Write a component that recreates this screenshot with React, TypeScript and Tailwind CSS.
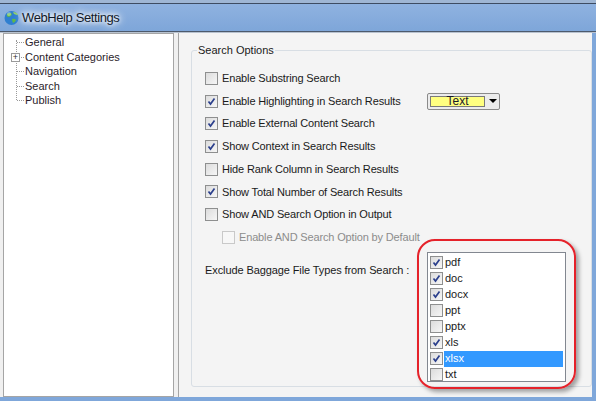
const font = { fontFamily: '"Liberation Sans", Arial, sans-serif' };

const options = [
  { label: 'Enable Substring Search', checked: false },
  { label: 'Enable Highlighting in Search Results', checked: true, dropdown: true },
  { label: 'Enable External Content Search', checked: true },
  { label: 'Show Context in Search Results', checked: true },
  { label: 'Hide Rank Column in Search Results', checked: false },
  { label: 'Show Total Number of Search Results', checked: true },
  { label: 'Show AND Search Option in Output', checked: false },
  { label: 'Enable AND Search Option by Default', checked: false, disabled: true },
];

const fileTypes = [
  { name: 'pdf', checked: true },
  { name: 'doc', checked: true },
  { name: 'docx', checked: true },
  { name: 'ppt', checked: false },
  { name: 'pptx', checked: false },
  { name: 'xls', checked: true },
  { name: 'xlsx', checked: true, selected: true },
  { name: 'txt', checked: false },
];

const tree = ['General', 'Content Categories', 'Navigation', 'Search', 'Publish'];

function Check({ checked, disabled }: { checked: boolean; disabled?: boolean }) {
  return (
    <span
      className={`flex h-[13px] w-[13px] shrink-0 items-center justify-center border ${
        disabled
          ? 'border-[#c9c9c9] bg-[#f7f7f7]'
          : 'border-[#8e8f8f] bg-[linear-gradient(135deg,#dcdcdc,#f6f6f6)]'
      }`}
    >
      {checked && (
        <svg width="9" height="9" viewBox="0 0 9 9">
          <path d="M1.5 4.5 L3.5 7 L7.5 1.5" fill="none" stroke="#2b3f8c" strokeWidth="1.7" />
        </svg>
      )}
    </span>
  );
}

function Globe() {
  return (
    <svg width="17" height="17" viewBox="0 0 17 17">
      <circle cx="8.5" cy="9" r="7" fill="#2f7fd0" />
      <path d="M4 5 Q7 3 9 5 Q8 8 5 8 Q3 7 4 5Z" fill="#5fb84a" />
      <path d="M9 10 Q12 9 13 11 Q12 14 10 14 Q9 12 9 10Z" fill="#5fb84a" />
      <path d="M10 3 Q14 3 15 6 Q13 6 11 5Z" fill="#8fd06a" />
      <circle cx="6" cy="5" r="2" fill="#ffffff" opacity="0.35" />
    </svg>
  );
}

export default function App() {
  return (
    <div className="relative flex h-[401px] w-[596px] flex-col overflow-hidden bg-[#7fa7da]" style={font}>
      {/* title bar */}
      <div className="h-[3px] bg-[#9fb6d4]" />
      <div className="flex h-[28px] items-center border-t border-[#3e4c62] bg-[linear-gradient(to_bottom,#8fb2e0,#7ea6d9)] pl-[3px]">
        <Globe />
        <span className="ml-[2px] text-[13px] tracking-[-0.4px] text-[#111a2a] [text-shadow:0_0_4px_#fff,0_0_8px_#fff,0_0_10px_#fff]">
          WebHelp Settings
        </span>
      </div>
      <div className="h-px bg-[#4d5a6c]" />
      <div className="h-px bg-[#b8c2cf]" />

      {/* body */}
      <div className="mr-[4px] flex h-[364px] bg-[#f0f0f0] pl-[3px]">
        {/* tree */}
        <div className="relative w-[171px] border border-[#a5a5a5] bg-white pt-[1px]">
          <div className="absolute left-[12px] top-[6px] h-[60px] border-l border-dotted border-[#9a9a9a]" />
          {tree.map((item, i) => (
            <div key={item} className="relative flex h-[14.5px] items-center pl-[21px] text-[11px] text-[#2b1d2b]">
              <span className="absolute left-[13px] top-[7px] w-[7px] border-t border-dotted border-[#9a9a9a]" />
              {i === 1 && (
                <span className="absolute left-[7px] top-[3px] flex h-[9px] w-[9px] items-center justify-center border border-[#9a9a9a] bg-white text-[9px] leading-none text-[#333]">
                  +
                </span>
              )}
              {item}
            </div>
          ))}
        </div>

        {/* settings */}
        <div className="ml-[4px] flex-1 border-l border-[#a5a5a5] bg-[#f4f4f4] pl-[12px] pt-[17px]">
          <div className="relative h-[337px] rounded-[3px] border border-[#d8dee4] pl-[13px] pt-[16px]">
            <span className="absolute -top-[8px] left-[5px] bg-[#f4f4f4] px-[1px] text-[11px] leading-[15px] text-[#1a1a1a]">
              Search Options
            </span>
            {options.map((o) => (
              <div
                key={o.label}
                className={`flex h-[22.7px] items-center ${o.disabled ? 'pl-[17px]' : ''}`}
              >
                <Check checked={o.checked} disabled={o.disabled} />
                <span
                  className={`ml-[4px] text-[11px] tracking-[-0.15px] ${o.dropdown ? 'w-[205px]' : ''} ${
                    o.disabled ? 'text-[#8c8c8c]' : 'text-[#1a1a1a]'
                  }`}
                >
                  {o.label}
                </span>
                {o.dropdown && (
                  <div className="flex h-[17px] w-[73px] items-center rounded-[2px] border border-[#8a8a8a] bg-[#ececec] p-[2px]">
                    <div className="flex h-full w-[56px] items-center justify-center border border-[#7a7a7a] bg-[#ffff80] text-[12px] text-[#1a1a2a]">
                      Text
                    </div>
                    <span className="ml-[4px] h-0 w-0 border-x-[4px] border-t-[4px] border-x-transparent border-t-black" />
                  </div>
                )}
              </div>
            ))}

            <div className="mt-[11px] flex items-start">
              <span className="mt-[2px] w-[222px] text-[11px] tracking-[-0.1px] text-[#1a1a1a]">
                Exclude Baggage File Types from Search :
              </span>
              <div className="relative mt-[-8px]">
                <div className="pointer-events-none absolute -left-[10px] -top-[13px] h-[150px] w-[159px] rounded-[18px] border-[2px] border-[#e5222a] shadow-[3px_3px_4px_rgba(0,0,0,0.35)]" />
                <div className="h-[130px] w-[139px] border border-[#828790] bg-white pl-[2px] pt-[2px]">
                  {fileTypes.map((f) => (
                    <div key={f.name} className="flex h-[16px] items-center">
                      <Check checked={f.checked} />
                      <span
                        className={`ml-px flex h-[16px] flex-1 items-center pl-px text-[11px] ${
                          f.selected ? 'mr-[2px] bg-[#3399ff] text-white' : 'text-[#1a1a1a]'
                        }`}
                      >
                        {f.name}
                      </span>
                    </div>
                  ))}
                </div>
              </div>
            </div>
          </div>
        </div>
      </div>
    </div>
  );
}
